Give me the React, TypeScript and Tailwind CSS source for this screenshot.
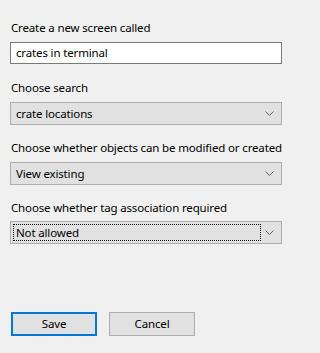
import React from "react";

function Chevron() {
  return (
    <svg width="9" height="5" viewBox="0 0 9 5" className="shrink-0">
      <path d="M0.5 0.5 L4.5 4.5 L8.5 0.5" fill="none" stroke="#606060" strokeWidth="1" />
    </svg>
  );
}

function Select({ value, focused }: { value: string; focused?: boolean }) {
  return (
    <div className="flex h-[23px] w-[272px] items-center border border-[#adadad] bg-[#e1e1e1]">
      <div className="flex h-full flex-1 items-center p-[2px]">
        <div
          className={
            "flex h-full w-full items-center pl-[2px] " +
            (focused ? "border border-dotted border-black" : "border border-transparent")
          }
        >
          {value}
        </div>
      </div>
      <div className="flex w-[18px] items-center justify-start pl-[2px]">
        <Chevron />
      </div>
    </div>
  );
}

export default function App() {
  return (
    <div
      className="h-[353px] w-full min-w-[302px] overflow-hidden bg-[#f0f0f0] text-[11.5px] leading-[16px] tracking-[-0.15px] text-black"
      style={{ fontFamily: '"Noto Sans", "Segoe UI", sans-serif' }}
    >
      <div className="flex flex-col pl-[10px] pt-[20px]">
        <div className="pl-[1px]">Create a new screen called</div>
        <div className="mt-[6px] flex h-[22px] w-[272px] items-center border border-[#7a7a7a] bg-white pl-[5px]">
          crates in terminal
        </div>
        <div className="mt-[16px] pl-[1px]">Choose search</div>
        <div className="mt-[6px]">
          <Select value="crate locations" />
        </div>
        <div className="mt-[15px] pl-[1px]">Choose whether objects can be modified or created</div>
        <div className="mt-[6px]">
          <Select value="View existing" />
        </div>
        <div className="mt-[15px] pl-[1px]">Choose whether tag association required</div>
        <div className="mt-[5px]">
          <Select value="Not allowed" focused />
        </div>
        <div className="mt-[68px] flex gap-[12px] pl-[1px]">
          <button className="h-[24px] w-[86px] border-2 border-[#0078d7] bg-[#e1e1e1] text-center">
            Save
          </button>
          <button className="h-[24px] w-[86px] border border-[#adadad] bg-[#e1e1e1] text-center">
            Cancel
          </button>
        </div>
      </div>
    </div>
  );
}
